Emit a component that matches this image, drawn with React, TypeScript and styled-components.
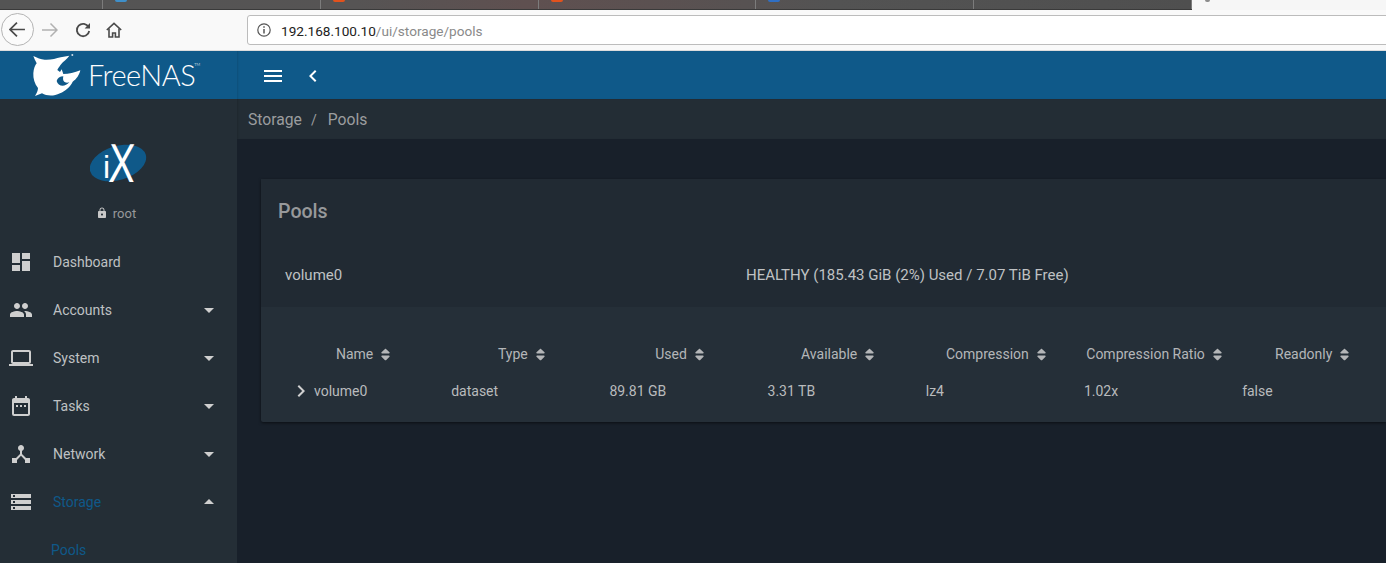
import React from 'react';
import styled, { createGlobalStyle } from 'styled-components';
import {
  MdArrowDropDown,
  MdArrowDropUp,
  MdChevronLeft,
  MdDashboard,
  MdDateRange,
  MdDeviceHub,
  MdKeyboardArrowRight,
  MdLaptop,
  MdLock,
  MdMenu,
  MdPeople,
  MdStorage,
} from 'react-icons/md';
import { FaSort } from 'react-icons/fa';

const GlobalStyle = createGlobalStyle`
  html, body {
    margin: 0;
    padding: 0;
    background: #18202a;
    overflow: hidden;
  }
  * { box-sizing: border-box; }
`;

const Page = styled.div`
  width: 1386px;
  height: 563px;
  overflow: hidden;
  display: flex;
  flex-direction: column;
  font-family: Roboto, 'Liberation Sans', sans-serif;
  font-size: 14px;
`;

/* browser chrome */
const TabStrip = styled.div`
  height: 10px;
  display: flex;
  background: #f6f6f6;
`;

const Tabs = styled.div`
  width: 1192px;
  display: flex;
  background: linear-gradient(90deg, #545454 0%, #565454 30%, #5f5050 44%, #5b5151 55%, #535353 70%, #4f4f4f 100%);
  border-bottom: 1px solid #3a3a3a;
  border-right: 1px solid #3a3a3a;
`;

const Tab = styled.div<{ $width: number }>`
  width: ${({ $width }) => $width}px;
  border-right: 1px solid #7c7c7c;
  padding-left: 12px;
  flex-shrink: 0;
`;

const TabIcon = styled.div<{ $color: string; $size?: number }>`
  width: ${({ $size }) => $size ?? 12}px;
  height: 2px;
  border-radius: 0 0 6px 6px;
  background: ${({ $color }) => $color};
`;

const ActiveTab = styled.div`
  flex: 1;
  padding-left: 13px;
`;

const Toolbar = styled.div`
  height: 41px;
  flex-shrink: 0;
  display: flex;
  align-items: center;
  background: #f9f9f9;
  border-bottom: 1px solid #dcdcdc;
  padding-left: 1px;
  padding-bottom: 1px;
`;

const BackButton = styled.div`
  width: 33px;
  height: 33px;
  border-radius: 50%;
  border: 1px solid #b4b4b4;
  background: #fbfbfb;
  display: flex;
  align-items: center;
  justify-content: center;
  flex-shrink: 0;
`;

const ToolButton = styled.div<{ $ml: number }>`
  margin-left: ${({ $ml }) => $ml}px;
  width: 16px;
  height: 16px;
  display: flex;
  flex-shrink: 0;
`;

const UrlBar = styled.div`
  margin-left: 125px;
  width: 1150px;
  height: 30px;
  flex-shrink: 0;
  background: #fff;
  border: 1px solid #bcbcbc;
  border-radius: 3px;
  display: flex;
  align-items: center;
  padding-left: 9px;
  font-size: 13.6px;
  color: #222;
`;

const UrlText = styled.span`
  margin-left: 10px;
  padding-top: 2px;
`;

const UrlPath = styled.span`
  color: #8a8a8a;
`;

/* app */
const Shell = styled.div`
  flex: 1;
  display: flex;
  min-height: 0;
`;

const Sidebar = styled.aside`
  width: 237px;
  flex-shrink: 0;
  display: flex;
  flex-direction: column;
  background: #242e36;
  overflow: hidden;
`;

const Brand = styled.div`
  height: 48px;
  flex-shrink: 0;
  background: #0f5989;
  display: flex;
  align-items: center;
  padding-left: 30px;
  color: #fff;
`;

const BrandName = styled.span`
  position: relative;
  font-family: Lato, 'Open Sans', sans-serif;
  font-weight: 300;
  font-size: 29px;
  line-height: 48px;
  margin-left: 2px;
  letter-spacing: -0.5px;
`;

const Trademark = styled.sup`
  position: absolute;
  right: -5px;
  top: -4px;
  font-size: 4px;
  line-height: 36px;
  letter-spacing: 0;
`;

const UserBlock = styled.div`
  height: 139px;
  flex-shrink: 0;
  display: flex;
  flex-direction: column;
  align-items: center;
  padding-top: 32px;
`;

const UserName = styled.div`
  margin-top: 9px;
  padding-right: 5px;
  display: flex;
  align-items: center;
  gap: 5px;
  height: 18px;
  font-size: 13px;
  color: #97999b;
  svg {
    color: #c8c8c8;
  }
`;

const NavItem = styled.div<{ $active?: boolean }>`
  height: 48px;
  flex-shrink: 0;
  display: flex;
  align-items: center;
  padding: 0 16px 0 9px;
  color: ${({ $active }) => ($active ? '#0f5989' : '#bfc1c3')};
`;

const NavIcon = styled.span`
  display: flex;
  color: #cfcfcf;
`;

const NavLabel = styled.span`
  margin-left: 20px;
  flex: 1;
`;

const NavArrow = styled.span`
  display: flex;
  color: #cfcfcf;
`;

const SubItem = styled.div`
  height: 48px;
  flex-shrink: 0;
  display: flex;
  align-items: center;
  padding-left: 51px;
  color: #0f5989;
`;

const Main = styled.main`
  flex: 1;
  min-width: 0;
  display: flex;
  flex-direction: column;
  background: #18202a;
`;

const TopBar = styled.div`
  height: 48px;
  flex-shrink: 0;
  background: #0f5989;
  display: flex;
  align-items: center;
  padding: 2px 0 0 24px;
  gap: 16px;
  color: #fff;
  box-shadow: inset 2px 0 2px -1px rgba(0, 0, 0, 0.12);
`;

const Breadcrumb = styled.div`
  height: 40px;
  flex-shrink: 0;
  display: flex;
  align-items: center;
  padding: 1px 0 0 11px;
  background: #232d35;
  font-size: 15.7px;
  color: #9b9d9f;
  box-shadow: inset 2px 0 2px -1px rgba(0, 0, 0, 0.15);
`;

const Slash = styled.span`
  margin: 0 11px 0 9px;
  font-size: 14px;
`;

const Content = styled.div`
  flex: 1;
  padding: 40px 0 0 24px;
`;

const Card = styled.section`
  background: #252f38;
  border-radius: 2px 0 0 2px;
  box-shadow: 0 1px 3px rgba(0, 0, 0, 0.55);
`;

const CardHead = styled.div`
  background: #212a33;
`;

const CardTitle = styled.h2`
  margin: 0;
  height: 64px;
  display: flex;
  align-items: center;
  padding-left: 17px;
  font-size: 19.6px;
  font-weight: 500;
  color: #97999b;
`;

const PoolRow = styled.div`
  height: 64px;
  display: grid;
  grid-template-columns: 461px 1fr;
  align-items: center;
  padding-left: 24px;
  font-size: 15px;
  color: #bfc1c3;
`;

const DataTable = styled.div`
  padding: 28px 0 13px 22px;
`;

const TableRow = styled.div<{ $height: number }>`
  display: grid;
  grid-template-columns: repeat(7, 158.2px);
  height: ${({ $height }) => $height}px;
  align-items: center;
`;

const HeadCell = styled.div`
  display: flex;
  justify-content: center;
  align-items: center;
  gap: 5px;
  padding-left: 5px;
  white-space: nowrap;
  color: #b4b6b8;
  svg {
    color: #b4b6b8;
  }
`;

const DataCell = styled.div<{ $first?: boolean }>`
  display: flex;
  align-items: center;
  padding-left: ${({ $first }) => ($first ? 6 : 10)}px;
  color: #b9bbbd;
  white-space: nowrap;
`;

const ExpandIcon = styled.span`
  display: flex;
  color: #d0d0d0;
  margin-right: 1px;
`;

const tabs = [
  { width: 103, color: '' },
  { width: 218, color: '#3f8fc9' },
  { width: 218, color: '#e2521d' },
  { width: 217, color: '#e2521d' },
  { width: 218, color: '#2f6fc4' },
  { width: 218, color: '' },
];

const navItems = [
  { label: 'Accounts', icon: <MdPeople size={24} /> },
  { label: 'System', icon: <MdLaptop size={24} /> },
  { label: 'Tasks', icon: <MdDateRange size={24} /> },
  { label: 'Network', icon: <MdDeviceHub size={24} /> },
];

const columns = ['Name', 'Type', 'Used', 'Available', 'Compression', 'Compression Ratio', 'Readonly'];
const cells = ['dataset', '89.81 GB', '3.31 TB', 'lz4', '1.02x', 'false'];

function SharkLogo() {
  return (
    <svg width="56" height="48" viewBox="0 0 168 144">
      <path
        fillRule="evenodd"
        fill="#fff"
        d="M10 15 C22 21 32 25 44 26 C62 27 78 23 92 19 L118 14 C112 23 100 31 92 41 C88 47 84 51 82 57 L90 63 L95 55 L100 69 C116 69 134 65 151 58 C148 71 140 85 128 92 C122 106 106 120 90 127 C70 137 50 135 36 127 L15 135 C20 127 24 119 24 111 C14 99 9 83 10 67 C11 53 15 43 20 37 C16 29 12 21 10 15 Z
           M80 90 C84 106 104 110 118 94 C106 98 96 92 100 76 C90 76 82 82 80 90 Z"
      />
      <circle cx="127" cy="12" r="3" fill="#cfdde8" />
    </svg>
  );
}

function IxLogo() {
  return (
    <svg width="58" height="64" viewBox="0 -10 58 64">
      <ellipse cx="28" cy="22" rx="29" ry="17" fill="#0f5989" transform="rotate(-17 28 22)" />
      <text x="13" y="37" fontFamily="Liberation Sans" fontSize="32" fill="#fff">
        i
      </text>
      <text
        transform="translate(18 41) scale(0.72 1) skewX(-3)"
        fontFamily="Liberation Sans"
        fontSize="55"
        fill="#fff"
      >
        X
      </text>
    </svg>
  );
}

function ArrowIcon({ color, size }: { color: string; size: number }) {
  return (
    <svg width={size} height={size} viewBox="0 0 16 16" fill="none" stroke={color} strokeWidth="1.6">
      <path d="M1 8h14M7.5 1.5 1 8l6.5 6.5" />
    </svg>
  );
}

export default function App() {
  return (
    <Page>
      <GlobalStyle />
      <TabStrip>
        <Tabs>
          {tabs.map((tab, index) => (
            <Tab key={index} $width={tab.width}>
              {tab.color && <TabIcon $color={tab.color} />}
            </Tab>
          ))}
        </Tabs>
        <ActiveTab>
          <TabIcon $color="#8c8c8c" $size={5} />
        </ActiveTab>
      </TabStrip>
      <Toolbar>
        <BackButton>
          <ArrowIcon color="#4a4a4a" size={17} />
        </BackButton>
        <ToolButton $ml={8}>
          <svg width="16" height="16" viewBox="0 0 16 16" fill="none" stroke="#b1b1b1" strokeWidth="1.5">
            <path d="M0 8h15M8.5 1.5 15 8l-6.5 6.5" />
          </svg>
        </ToolButton>
        <ToolButton $ml={17}>
          <svg width="16" height="16" viewBox="0 0 16 16" fill="none" stroke="#4a4a4a" strokeWidth="1.8">
            <path d="M13.6 5.2A6.2 6.2 0 1 0 14.2 9" />
            <path d="M15 1v5.4H9.6" fill="#4a4a4a" stroke="none" />
          </svg>
        </ToolButton>
        <ToolButton $ml={15}>
          <svg width="16" height="16" viewBox="0 0 16 16" fill="none" stroke="#4a4a4a" strokeWidth="1.6">
            <path d="M.8 8 8 1.4 15.2 8" />
            <path d="M3 6.6V15h3.6v-4h2.8v4H13V6.6" />
          </svg>
        </ToolButton>
        <UrlBar>
          <svg width="14" height="14" viewBox="0 0 14 14" fill="none" stroke="#555" strokeWidth="1.2">
            <circle cx="7" cy="7" r="6.2" />
            <path d="M7 6v4.4M7 3.2v1.6" strokeWidth="1.5" />
          </svg>
          <UrlText>
            192.168.100.10<UrlPath>/ui/storage/pools</UrlPath>
          </UrlText>
        </UrlBar>
      </Toolbar>
      <Shell>
        <Sidebar>
          <Brand>
            <SharkLogo />
            <BrandName>
              FreeNAS<Trademark>TM</Trademark>
            </BrandName>
          </Brand>
          <UserBlock>
            <IxLogo />
            <UserName>
              <MdLock size={12} />
              root
            </UserName>
          </UserBlock>
          <NavItem>
            <NavIcon>
              <MdDashboard size={24} />
            </NavIcon>
            <NavLabel>Dashboard</NavLabel>
          </NavItem>
          {navItems.map((item) => (
            <NavItem key={item.label}>
              <NavIcon>{item.icon}</NavIcon>
              <NavLabel>{item.label}</NavLabel>
              <NavArrow>
                <MdArrowDropDown size={24} />
              </NavArrow>
            </NavItem>
          ))}
          <NavItem $active>
            <NavIcon>
              <MdStorage size={24} />
            </NavIcon>
            <NavLabel>Storage</NavLabel>
            <NavArrow>
              <MdArrowDropUp size={24} />
            </NavArrow>
          </NavItem>
          <SubItem>Pools</SubItem>
        </Sidebar>
        <Main>
          <TopBar>
            <MdMenu size={24} />
            <MdChevronLeft size={24} />
          </TopBar>
          <Breadcrumb>
            Storage<Slash>/</Slash>Pools
          </Breadcrumb>
          <Content>
            <Card>
              <CardHead>
                <CardTitle>Pools</CardTitle>
                <PoolRow>
                  <span>volume0</span>
                  <span>HEALTHY (185.43 GiB (2%) Used / 7.07 TiB Free)</span>
                </PoolRow>
              </CardHead>
              <DataTable>
                <TableRow $height={38}>
                  {columns.map((column) => (
                    <HeadCell key={column}>
                      {column}
                      <FaSort size={15} />
                    </HeadCell>
                  ))}
                </TableRow>
                <TableRow $height={36}>
                  <DataCell $first>
                    <ExpandIcon>
                      <MdKeyboardArrowRight size={24} />
                    </ExpandIcon>
                    volume0
                  </DataCell>
                  {cells.map((cell) => (
                    <DataCell key={cell}>{cell}</DataCell>
                  ))}
                </TableRow>
              </DataTable>
            </Card>
          </Content>
        </Main>
      </Shell>
    </Page>
  );
}
